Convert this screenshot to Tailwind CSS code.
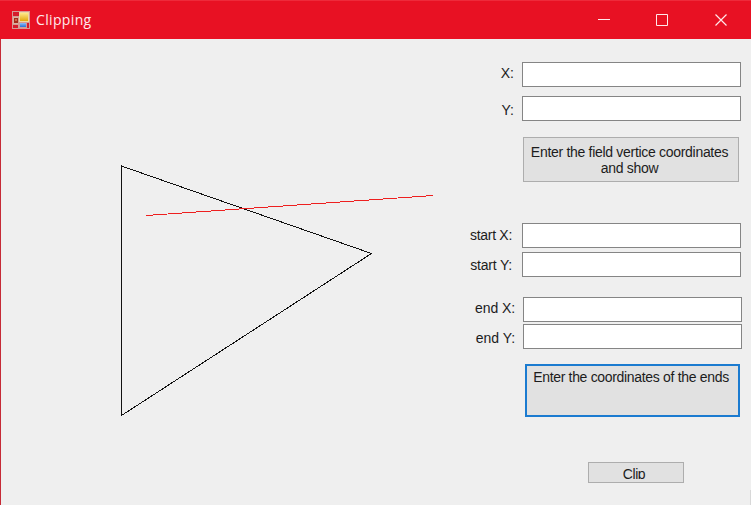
<!DOCTYPE html>
<html lang="en">
<head>
<meta charset="utf-8">
<title>Clipping</title>
<script src="https://cdn.jsdelivr.net/npm/@tailwindcss/browser@4"></script>
</head>
<body class="w-[751px] h-[505px] overflow-hidden bg-[#efefef] font-['Liberation_Sans',sans-serif] text-[14px] leading-4 text-[#1c1c1c]">
<div class="flex h-[505px] w-[751px] flex-col border-l border-[#c62a36]">
  <header class="-ml-px flex h-[39px] shrink-0 items-center border-t border-[#ee2a3a] bg-[#e81123] pl-3 text-white">
    <svg class="size-[18px] shrink-0" viewBox="0 0 18 18">
      <defs>
        <linearGradient id="y" x1="0" x2="0" y1="0" y2="1"><stop stop-color="#ffe98a"/><stop offset="1" stop-color="#e3a80c"/></linearGradient>
        <linearGradient id="b" x1="0" x2="0" y1="0" y2="1"><stop stop-color="#8fbcf5"/><stop offset="1" stop-color="#2a70d8"/></linearGradient>
      </defs>
      <rect width="18" height="18" fill="#d49a94"/>
      <rect x="1" y="1" width="6" height="4" fill="#d51c2c"/>
      <rect x="1" y="6" width="5" height="7" fill="#dcb0a0"/>
      <rect x="2" y="7" width="4" height="5" fill="#a52a1a"/>
      <rect x="3" y="8" width="2" height="2" fill="#d0664c"/>
      <rect x="1" y="14" width="5" height="3" fill="#d51c2c"/>
      <rect x="7" y="1" width="10" height="10" fill="#efd9a0"/>
      <rect x="8" y="2" width="8" height="8" fill="url(#y)"/>
      <rect x="8" y="12" width="6" height="4" fill="url(#b)"/>
      <rect x="15" y="12" width="2" height="5" fill="#d51c2c"/>
    </svg>
    <span class="ml-[6px] w-[100px] font-['Open_Sans',sans-serif] text-[14px] leading-5 tracking-[0.35px] text-[#ffe9ea]">Clipping</span>
    <svg class="mr-[22px] ml-auto h-[14px] w-[131px]" viewBox="0 0 131 14" fill="none" stroke="#ffe9ea">
      <path d="M0 6.5h12M58.5 1.5h11v11h-11z"/>
      <path d="M117.5 1.5l11 11M128.5 1.5l-11 11" stroke-width="1.2"/>
    </svg>
  </header>
  <main class="flex flex-1">
    <svg class="-ml-px h-[466px] w-[450px] shrink-0" viewBox="0 39 450 466" fill="none" shape-rendering="crispEdges">
      <path d="M121.5 166L371.5 253.500L121.500 415.500z" stroke="#111"/>
      <path d="M146 215.500L433.500 195.500" stroke="#ee2020"/>
    </svg>
    <form class="w-[301px] shrink-0 pt-[23px]">
      <div class="flex h-6"><label class="w-[64px] pt-[3px] text-right">X:</label><div class="ml-[8px] h-[25px] w-[219px] border border-[#858585] bg-white"></div></div>
      <div class="mt-[10px] flex h-[25px]"><label class="w-[64px] pt-[6px] text-right">Y:</label><div class="ml-[8px] h-[25px] w-[219px] border border-[#858585] bg-white"></div></div>
      <button type="button" class="mt-4 ml-[73px] block h-[45px] w-[216px] border border-[#adadad] bg-[#e1e1e1] pr-[3px] text-center whitespace-nowrap"><span class="block tracking-[-0.3px]">Enter the field vertice coordinates</span><span class="block tracking-[-0.3px]">and show</span></button>
      <div class="mt-[41px] flex h-[25px]"><label class="w-[62px] pt-[4px] text-right tracking-[-0.3px]">start X:</label><div class="ml-[10px] h-[25px] w-[219px] border border-[#858585] bg-white"></div></div>
      <div class="mt-1 flex h-[25px]"><label class="w-[62px] pt-[5px] text-right tracking-[-0.2px]">start Y:</label><div class="ml-[10px] h-[25px] w-[219px] border border-[#858585] bg-white"></div></div>
      <div class="mt-[20px] flex h-[25px]"><label class="w-[65px] pt-[3px] text-right tracking-[-0.1px]">end X:</label><div class="ml-[8px] h-[25px] w-[219px] border border-[#858585] bg-white"></div></div>
      <div class="mt-[2px] flex h-[25px]"><label class="w-[65px] pt-[6px] text-right tracking-[-0.05px]">end Y:</label><div class="ml-[8px] h-[25px] w-[219px] border border-[#858585] bg-white"></div></div>
      <button type="button" class="mt-[15px] ml-[75px] flex h-[53px] w-[215px] items-start justify-center border-2 border-[#1b7bd0] bg-[#e1e1e1] pt-[3px] pr-[3px] tracking-[-0.32px] whitespace-nowrap">Enter the coordinates of the ends</button>
      <button type="button" class="mt-[45px] ml-[138px] flex h-[21px] w-[96px] items-start justify-center border border-[#adadad] bg-[#e1e1e1] pt-[3px]"><span class="block h-[13px] overflow-hidden pr-1 tracking-[-0.4px]">Clip</span></button>
      <div class="mt-[7px] ml-[300px] h-[15px] w-px bg-[#d8d8d8]"></div>
    </form>
  </main>
</div>
</body>
</html>
